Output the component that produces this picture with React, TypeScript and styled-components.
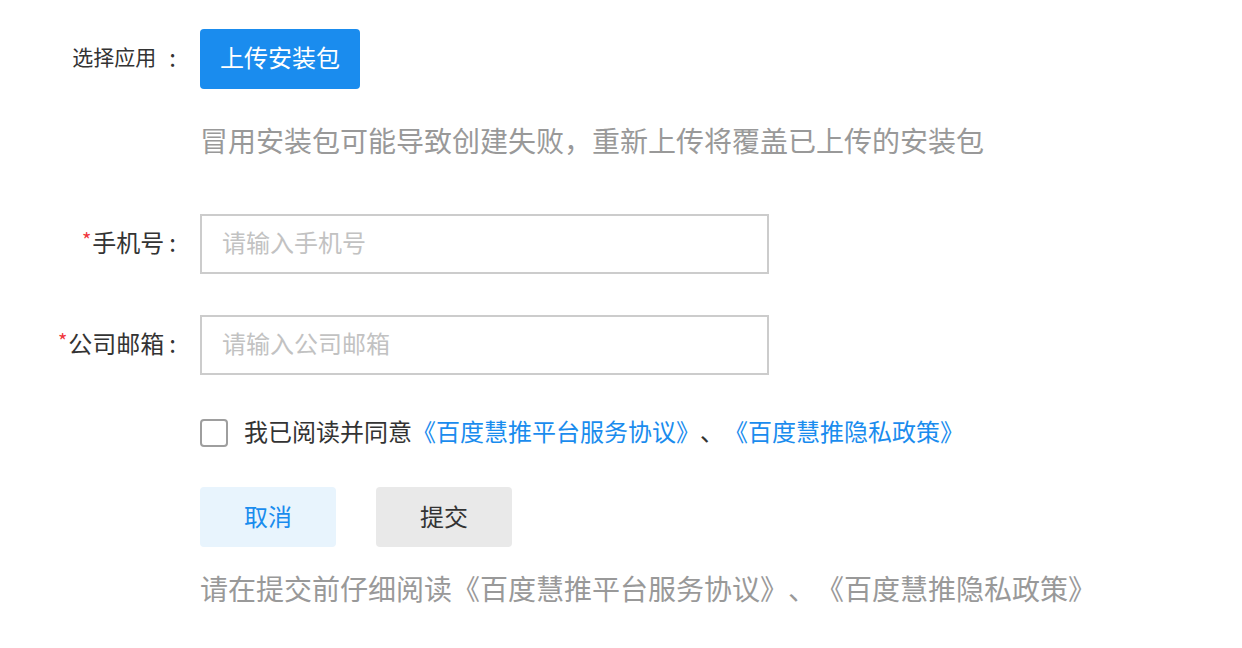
import styled, { createGlobalStyle } from 'styled-components';

const GlobalStyle = createGlobalStyle`
  body {
    margin: 0;
    background: #fff;
    font-family: "Noto Sans CJK SC", "Noto Sans", sans-serif;
    text-spacing-trim: space-all;
  }
`;

const Page = styled.div`
  padding-top: 29px;
  display: flex;
  flex-direction: column;
`;

const Row = styled.div<{ $top?: number }>`
  display: flex;
  align-items: center;
  margin-top: ${({ $top }) => $top ?? 0}px;
`;

const Label = styled.div<{ $size?: number }>`
  box-sizing: border-box;
  width: 176px;
  margin-right: 24px;
  padding-bottom: 6px;
  display: flex;
  justify-content: flex-end;
  align-items: center;
  font-size: ${({ $size }) => $size ?? 24}px;
  color: #333;
  white-space: nowrap;
`;

const Star = styled.span`
  color: #f0353b;
  font-size: 20px;
  line-height: 20px;
  margin-right: 1px;
  margin-bottom: 2px;
`;

const Colon = styled.span<{ $gap: number; $size?: number }>`
  margin-left: ${({ $gap }) => $gap}px;
  font-size: ${({ $size }) => ($size ? `${$size}px` : 'inherit')};
`;

const Indent = styled.div<{ $top: number }>`
  margin-left: 200px;
  margin-top: ${({ $top }) => $top}px;
`;

const UploadButton = styled.button`
  width: 160px;
  height: 60px;
  border: none;
  border-radius: 4px;
  padding: 0 0 5px;
  background: #1a8cee;
  color: #fff;
  font-family: inherit;
  font-size: 24px;
  cursor: pointer;
`;

const Hint = styled.div<{ $top: number }>`
  margin-left: 200px;
  margin-top: ${({ $top }) => $top}px;
  font-size: 28px;
  line-height: 40px;
  padding-bottom: 4px;
  color: #999;
  white-space: nowrap;
`;

const Input = styled.input`
  box-sizing: border-box;
  width: 569px;
  height: 60px;
  border: 2px solid #ccc;
  border-radius: 0;
  padding: 0 20px 6px;
  font-family: inherit;
  font-size: 24px;
  color: #333;
  outline: none;
  &::placeholder {
    color: #c2c2c2;
  }
`;

const AgreeLine = styled.label`
  display: flex;
  align-items: center;
  height: 40px;
  font-size: 24px;
  color: #333;
  white-space: nowrap;
`;

const AgreeText = styled.span`
  padding-bottom: 6px;
`;

const Box = styled.span`
  box-sizing: border-box;
  width: 28px;
  height: 28px;
  border: 2px solid #9e9e9e;
  border-radius: 4px;
  margin-right: 16px;
  flex-shrink: 0;
`;

const Link = styled.a`
  color: #1a8cee;
  text-decoration: none;
`;

const Actions = styled.div`
  display: flex;
  gap: 40px;
`;

const ActionButton = styled.button<{ $primary?: boolean }>`
  width: 136px;
  height: 60px;
  border: none;
  border-radius: 4px;
  padding: 0 0 4px;
  font-family: inherit;
  font-size: 24px;
  cursor: pointer;
  background: ${({ $primary }) => ($primary ? '#e8f4fd' : '#e9e9e9')};
  color: ${({ $primary }) => ($primary ? '#1a8cee' : '#333')};
`;

export default function App() {
  return (
    <Page>
      <GlobalStyle />
      <Row>
        <Label $size={21}>
          选择应用<Colon $gap={13} $size={24}>:</Colon>
        </Label>
        <UploadButton>上传安装包</UploadButton>
      </Row>

      <Hint $top={31}>冒用安装包可能导致创建失败，重新上传将覆盖已上传的安装包</Hint>

      <Row $top={50}>
        <Label>
          <Star>*</Star>手机号<Colon $gap={5}>:</Colon>
        </Label>
        <Input placeholder="请输入手机号" />
      </Row>

      <Row $top={41}>
        <Label>
          <Star>*</Star>公司邮箱<Colon $gap={5}>:</Colon>
        </Label>
        <Input placeholder="请输入公司邮箱" />
      </Row>

      <Indent $top={38}>
        <AgreeLine>
          <Box />
          <AgreeText>
            我已阅读并同意<Link>《百度慧推平台服务协议》</Link>、<Link>《百度慧推隐私政策》</Link>
          </AgreeText>
        </AgreeLine>
      </Indent>

      <Indent $top={34}>
        <Actions>
          <ActionButton $primary>取消</ActionButton>
          <ActionButton>提交</ActionButton>
        </Actions>
      </Indent>

      <Hint $top={21}>请在提交前仔细阅读《百度慧推平台服务协议》、《百度慧推隐私政策》</Hint>
    </Page>
  );
}
